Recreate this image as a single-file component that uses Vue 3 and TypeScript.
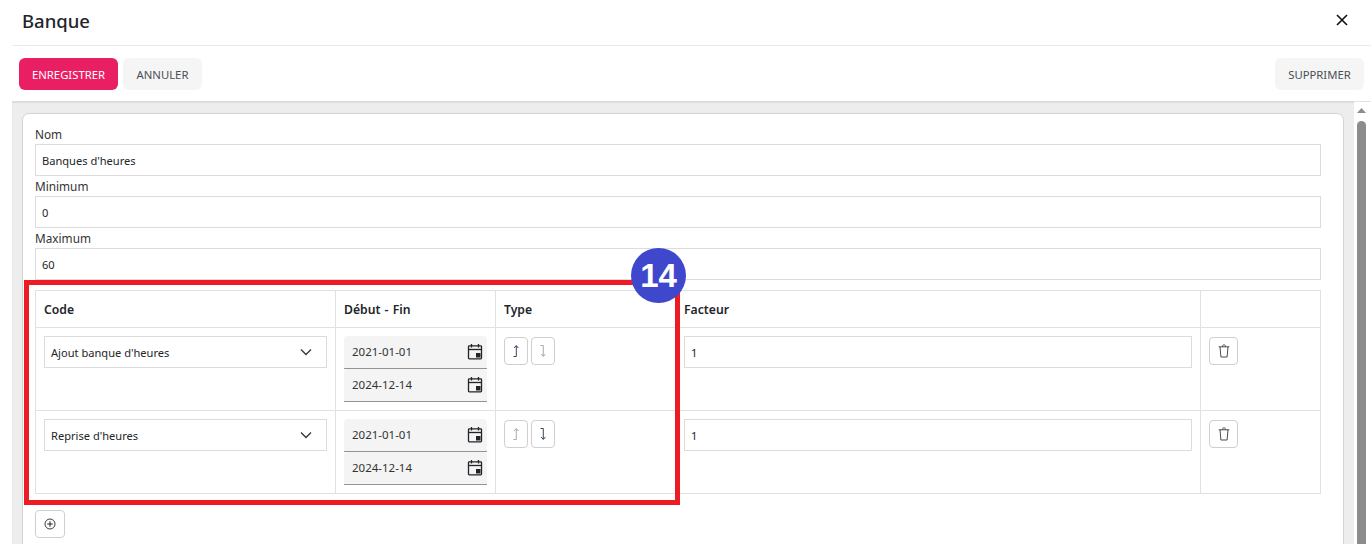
<script setup lang="ts">
interface Row { code: string; upActive: boolean }
const rows: Row[] = [
  { code: "Ajout banque d'heures", upActive: true },
  { code: "Reprise d'heures", upActive: false },
]
const fields = [
  { label: 'Nom', value: "Banques d'heures" },
  { label: 'Minimum', value: '0' },
  { label: 'Maximum', value: '60' },
]
</script>

<template>
  <div class="page">
    <header class="head">
      <h1>Banque</h1>
      <svg class="close" width="14" height="14" viewBox="0 0 14 14"><path d="M2 2l10 10M12 2L2 12" stroke="#111" stroke-width="1.6" fill="none" /></svg>
    </header>
    <div class="toolbar">
      <button class="btn primary">ENREGISTRER</button>
      <button class="btn">ANNULER</button>
      <button class="btn right">SUPPRIMER</button>
    </div>
    <div class="body">
      <div class="scrollarea">
        <div class="card">
          <div v-for="f in fields" :key="f.label" class="field">
            <label>{{ f.label }}</label>
            <div class="input">{{ f.value }}</div>
          </div>
          <div class="table-wrap">
            <table>
              <colgroup>
                <col style="width:300px" /><col style="width:160px" /><col style="width:180px" /><col style="width:525px" /><col />
              </colgroup>
              <thead>
                <tr><th>Code</th><th>Début - Fin</th><th>Type</th><th>Facteur</th><th></th></tr>
              </thead>
              <tbody>
                <tr v-for="r in rows" :key="r.code">
                  <td>
                    <div class="input select">
                      <span>{{ r.code }}</span>
                      <svg width="14" height="14" viewBox="0 0 14 14"><path d="M2 4.5l5 5 5-5" stroke="#343a40" stroke-width="1.4" fill="none" /></svg>
                    </div>
                  </td>
                  <td>
                    <div v-for="d in ['2021-01-01', '2024-12-14']" :key="d" class="date">
                      <span>{{ d }}</span>
                      <svg width="16" height="17" viewBox="0 0 16 17">
                        <path d="M4.500 1v3.500M11.500 1v3.500" stroke="#212529" stroke-width="1.300" />
                        <rect x="1.500" y="2.800" width="13" height="13" rx="0.800" fill="none" stroke="#212529" stroke-width="1.300" />
                        <path d="M2 6.500h12" stroke="#212529" stroke-width="1.300" />
                        <rect x="9" y="10" width="4.500" height="4.500" fill="#212529" />
                      </svg>
                    </div>
                  </td>
                  <td>
                    <div class="type-btns">
                      <button class="icon-btn small">
                        <svg :class="{ dim: !r.upActive }" width="12" height="16" viewBox="0 0 12 16"><path d="M3.500 13.500H6.300V3M4.200 5L6.300 2.500 8.400 5" stroke="#34495e" stroke-width="1" fill="none" /></svg>
                      </button>
                      <button class="icon-btn small">
                        <svg :class="{ dim: r.upActive }" width="12" height="16" viewBox="0 0 12 16"><path d="M3.500 2.500H6.300V13M4.200 11L6.300 13.500 8.400 11" stroke="#34495e" stroke-width="1" fill="none" /></svg>
                      </button>
                    </div>
                  </td>
                  <td><div class="input factor">1</div></td>
                  <td>
                    <button class="icon-btn trash">
                      <svg width="14" height="16" viewBox="0 0 14 16"><path d="M1.700 3.800h10.600M3 3.800l.9 10.200h6.200l.9-10.200M5.400 3.800c0-2.700 3.200-2.700 3.200 0" stroke="#343a40" stroke-width="0.900" fill="none" /></svg>
                    </button>
                  </td>
                </tr>
              </tbody>
            </table>
            <div class="mark">
              <div class="badge">14</div>
            </div>
          </div>
          <button class="icon-btn add">
            <svg width="14" height="14" viewBox="0 0 14 14"><circle cx="7" cy="7" r="5" fill="none" stroke="#212529" stroke-width="0.900" /><path d="M7 4.200v5.600M4.200 7h5.600" stroke="#212529" stroke-width="1" /></svg>
          </button>
        </div>
      </div>
      <div class="scrollbar">
        <svg class="arrow" width="9" height="5" viewBox="0 0 9 5"><path d="M0 5L4.500 0 9 5z" fill="#8c8c8c" /></svg>
        <div class="thumb"></div>
      </div>
    </div>
  </div>
</template>

<style>
html, body { margin: 0; background: #fff; overflow: hidden; }
</style>

<style scoped>
.page {
  width: 1371px;
  height: 553px;
  box-sizing: border-box;
  padding-left: 12px;
  background: #fff;
  color: #212529;
  font-family: "Noto Sans", "Open Sans", sans-serif;
  font-size: 11.1px;
  overflow: hidden;
}
.head {
  height: 45px;
  display: flex;
  align-items: center;
  justify-content: space-between;
  padding: 0 22px 0 10px;
  border-bottom: 1px solid #ebebeb;
}
h1 { margin: 0 0 3px; font-size: 18.5px; font-weight: 500; line-height: 1.2; }
.close { margin-bottom: 5px; }
.toolbar {
  height: 55px;
  display: flex;
  align-items: flex-start;
  gap: 5px;
  padding: 12px 7px 0;
  box-sizing: border-box;
}
.btn {
  height: 32px;
  width: 79px;
  border: 0;
  border-radius: 6px;
  padding: 0;
  background: #f5f5f5;
  color: #4a4f55;
  font: inherit;
  font-size: 11.3px;
}
.primary { width: 99px; background: #e91e63; color: #fff; }
.right { width: 89px; margin-left: auto; }
.body {
  height: 443px;
  display: flex;
  box-shadow: inset 0 2px 1px #dcdcdc;
  background: #ededed;
}
.scrollarea {
  flex: none;
  width: 1342px;
  box-sizing: border-box;
  overflow: hidden;
  padding: 12px 0 0 10px;
}
.scrollbar {
  flex: 1;
  background: #fff;
  border-top: 1px solid #e2e2e2;
  box-sizing: border-box;
  display: flex;
  flex-direction: column;
  align-items: flex-start;
  padding: 6px 0 0 3px;
}
.arrow { flex: none; margin-bottom: 8px; }
.thumb { flex: 1; width: 9px; background: #8c8c8c; border-radius: 5px 5px 0 0; }
.card {
  width: 1322px;
  height: 600px;
  box-sizing: border-box;
  background: #fff;
  border: 1px solid #d4d4d4;
  border-radius: 7px;
  padding: 12px;
}
.field label { display: block; height: 18px; line-height: 17px; color: #333; font-size: 11.8px; }
.field { height: 52px; width: 1286px; }
.input {
  height: 32px;
  box-sizing: border-box;
  border: 1px solid #dcdcdc;
  padding: 0 6px;
  display: flex;
  align-items: center;
  background: #fff;
}
.table-wrap { position: relative; margin-top: 8px; width: 1286px; }
table {
  width: 1286px;
  border-collapse: collapse;
  table-layout: fixed;
}
th, td {
  border: 1px solid #dee2e6;
  padding: 8px;
  text-align: left;
  vertical-align: top;
}
th { height: 37px; box-sizing: border-box; padding: 0 8px; font-weight: 600; font-size: 12.2px; word-spacing: 1px; vertical-align: middle; }
tbody tr { height: 83px; }
.select { justify-content: space-between; padding-right: 13px; }
.date {
  height: 33px;
  box-sizing: border-box;
  background: #f4f4f4;
  border-bottom: 1px solid #949494;
  border-radius: 4px 4px 0 0;
  padding: 0 4px 2px 8px;
  display: flex;
  align-items: center;
  justify-content: space-between;
  color: #333;
  font-size: 11.5px;
}
.type-btns { display: flex; gap: 3px; }
.icon-btn {
  padding: 0;
  background: #fff;
  border: 1px solid #cfcfcf;
  border-radius: 4px;
  display: flex;
  align-items: center;
  justify-content: center;
}
.small { width: 24px; height: 28px; margin-top: 1px; }
.dim { opacity: 0.45; }
.trash { width: 29px; height: 28px; margin-top: 1px; }
.add { width: 30px; height: 28px; margin-top: 16px; }
.mark {
  position: absolute;
  left: -11px;
  top: -10px;
  width: 656px;
  height: 225px;
  box-sizing: border-box;
  border: 5px solid #ed1c24;
  pointer-events: none;
}
.badge {
  position: absolute;
  left: 602px;
  top: -37px;
  width: 55px;
  height: 55px;
  border-radius: 50%;
  background: #3f48cc;
  color: #fff;
  font-family: "Liberation Sans", sans-serif;
  font-weight: 700;
  font-size: 33px;
  display: flex;
  align-items: center;
  justify-content: center;
}
</style>
